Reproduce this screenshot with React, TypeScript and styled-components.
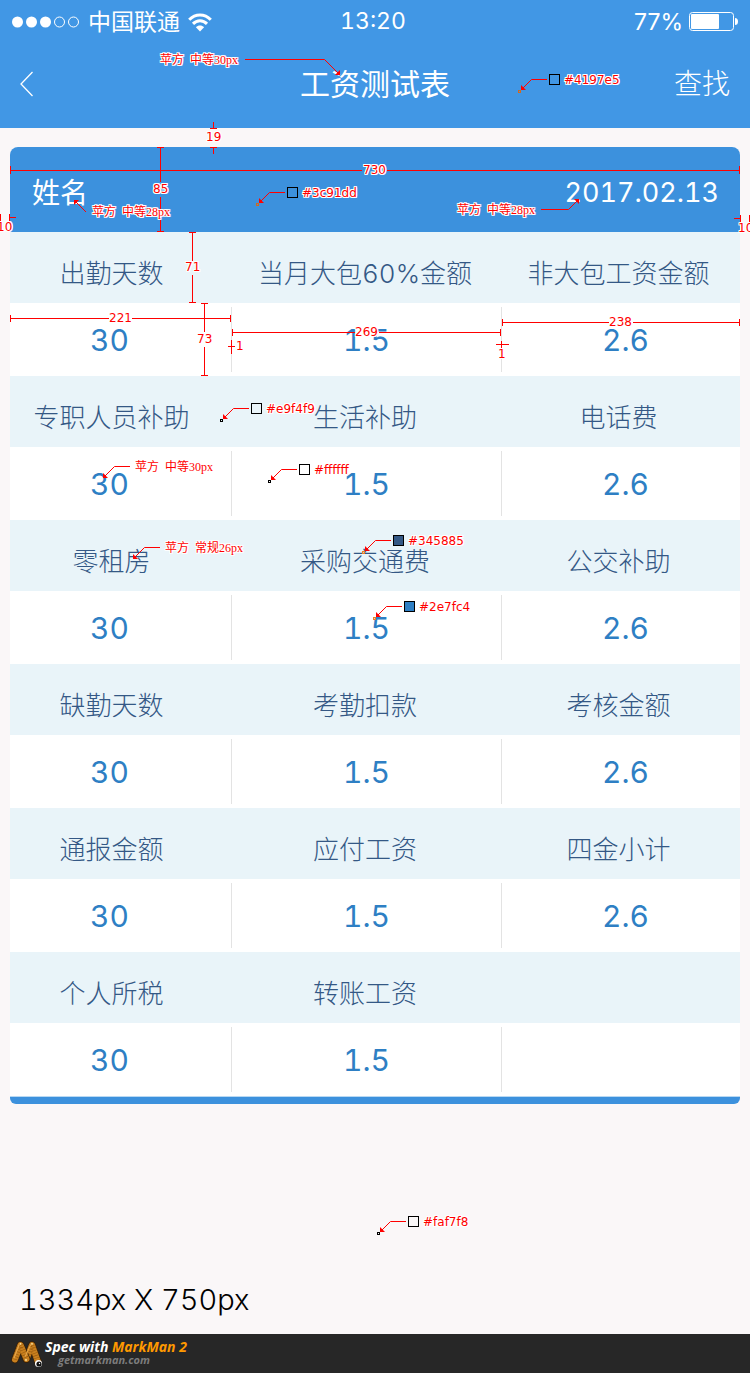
import React from 'react';
import styled, { createGlobalStyle } from 'styled-components';

const GlobalStyle = createGlobalStyle`
  *, *::before, *::after { box-sizing: border-box; }
  body { margin: 0; background: #faf7f8; }
`;

const UI_FONT = 'Inter, "Noto Sans CJK SC", sans-serif';

const Page = styled.div`
  position: relative;
  display: flex;
  flex-direction: column;
  min-height: 100vh;
  overflow: hidden;
  background: #faf7f8;
  font-family: ${UI_FONT};
  font-variant-numeric: tabular-nums;
`;

const Header = styled.header`
  background: #4197e5;
  color: #fff;
`;

const StatusBar = styled.div`
  display: grid;
  grid-template-columns: 1fr auto 1fr;
  align-items: center;
  height: 42px;
  padding: 2px 12px 0;
  font-size: 23px;
  line-height: 28px;
`;

const StatusGroup = styled.div<{ $end?: boolean }>`
  display: flex;
  align-items: center;
  justify-content: ${(p) => (p.$end ? 'flex-end' : 'flex-start')};
  gap: ${(p) => (p.$end ? 6 : 8)}px;
`;

const Time = styled.time`
  margin-right: 4px;
  padding-bottom: 2px;
`;

const Percent = styled.span`
  font-variant-numeric: normal;
`;

const NavBar = styled.nav`
  display: grid;
  grid-template-columns: 1fr auto 1fr;
  align-items: center;
  height: 86px;
  padding: 0 20px 2px;
`;

const NavButton = styled.button<{ $end?: boolean }>`
  justify-self: ${(p) => (p.$end ? 'end' : 'start')};
  display: flex;
  align-items: center;
  padding: 0;
  border: 0;
  background: none;
  color: inherit;
  font: 300 28px/40px ${UI_FONT};
  cursor: pointer;
`;

const Title = styled.h1`
  margin: 0;
  font-size: 30px;
  font-weight: 400;
  line-height: 40px;
`;

const Card = styled.main`
  margin: 19px 10px 0;
  border-bottom: 7px solid #3c91dd;
  border-radius: 8px 8px 6px 6px;
  overflow: hidden;
  background: #fff;
`;

const CardHead = styled.div`
  display: flex;
  justify-content: space-between;
  align-items: center;
  height: 85px;
  padding: 6px 21px 0 22px;
  background: #3c91dd;
  color: #fff;
  font-size: 28px;
  line-height: 40px;
`;

const PayDate = styled.time`
  font-size: 27px;
`;

const Table = styled.table`
  width: 100%;
  table-layout: fixed;
  border-collapse: collapse;
  border-bottom: 1px solid #b9d9f3;
`;

const Col = styled.col<{ $share: number }>`
  width: ${(p) => (p.$share / 730) * 100}%;
`;

const LabelCell = styled.th`
  height: 71px;
  padding: 12px 0 0;
  background: #e9f4f9;
  color: #345885;
  font-size: 26px;
  font-weight: 300;
  line-height: 36px;
  white-space: nowrap;

  &:first-child { padding-right: 18px; }
  &:nth-child(2) { padding-right: 2px; }
  &:last-child { padding-right: 4px; }
`;

const ValueCell = styled.td`
  height: 73px;
  padding: 4px 0;
  color: #2e7fc4;
  font-size: 30px;
  font-weight: 400;
  line-height: 67px;
  text-align: center;

  &:first-child { padding-right: 22px; }
  &:last-child > div { padding-left: 9px; }
  & + & > div { border-left: 1px solid #e3e3e3; }
`;

const Value = styled.div`
  height: 65px;
`;

const SizeNote = styled.p`
  margin: auto 0 0;
  padding: 0 19px 14px;
  color: #000;
  font-size: 29px;
  font-weight: 300;
  line-height: 40px;
`;

const Credit = styled.footer`
  display: flex;
  align-items: center;
  gap: 2px;
  height: 39px;
  padding-left: 11px;
  background: #272727;
  color: #fff;
  font: italic 700 14px/14px "Open Sans", sans-serif;
`;

const CreditText = styled.div`
  display: flex;
  flex-direction: column;
  padding-bottom: 2px;
`;

const Brand = styled.span`
  color: #f90;
`;

const Site = styled.a`
  padding-left: 13px;
  color: #7c7c7c;
  font-size: 11px;
  line-height: 12px;
  text-decoration: none;
`;

/* Annotation layer: sits over the screen and never takes clicks. */
const Layer = styled.div`
  position: absolute;
  inset: 0;
  overflow: hidden;
  pointer-events: none;
`;

const Marks = styled.svg`
  position: absolute;
  left: 0;
  top: 0;
  display: block;
`;

const Tag = styled.span<{ $x: number; $y: number; $cjk?: boolean }>`
  position: absolute;
  left: ${(p) => p.$x}px;
  top: ${(p) => p.$y - 8}px;
  color: #f00;
  font: 12px/16px ${(p) =>
    p.$cjk
      ? '"Liberation Serif", "Noto Sans CJK SC", serif'
      : '"DejaVu Sans", sans-serif'};
  white-space: pre;
  text-shadow: 1px 0 #fff, -1px 0 #fff, 0 1px #fff, 0 -1px #fff,
    1px 1px #fff, -1px -1px #fff, 1px -1px #fff, -1px 1px #fff;
`;

const rows: { labels: string[]; values: string[] }[] = [
  { labels: ['出勤天数', '当月大包60%金额', '非大包工资金额'], values: ['30', '1.5', '2.6'] },
  { labels: ['专职人员补助', '生活补助', '电话费'], values: ['30', '1.5', '2.6'] },
  { labels: ['零租房', '采购交通费', '公交补助'], values: ['30', '1.5', '2.6'] },
  { labels: ['缺勤天数', '考勤扣款', '考核金额'], values: ['30', '1.5', '2.6'] },
  { labels: ['通报金额', '应付工资', '四金小计'], values: ['30', '1.5', '2.6'] },
  { labels: ['个人所税', '转账工资', ''], values: ['30', '1.5', ''] },
];

/* Measuring lines; each path is drawn on pixel centres. */
const rulers = [
  'M213.5 122V129M210 128.5h7M210 147.5h7M213.5 147V154',
  'M10 170.5H362M387 170.5H740M10.5 166v8M739.5 166v8',
  'M160.5 147V182M160.5 197V232M157 147.5h7M157 231.5h7',
  'M0.5 214v8M9.5 214v8M9 217.5h7',
  'M734 218.5h7M740.5 215v8M749.5 215v8',
  'M192.5 232V261M192.5 275V303M189 232.5h7M189 302.5h7',
  'M10 318.5H109M132 318.5H231M10.5 315v7M230.5 315v7',
  'M204.5 303V332M204.5 347V376M201 303.5h7M201 375.5h7',
  'M231.5 340V354M228 346.5h7',
  'M232 332.5H355M379 332.5H501M232.5 329v7M500.5 329v7',
  'M501.5 341V350M496 344.5h13',
  'M502 322.5H609M633 322.5H740M502.5 319v7M739.5 319v7',
];

const measures: [string, number, number][] = [
  ['19', 206, 137], ['730', 363, 170], ['85', 153, 189], ['10', -3, 227],
  ['10', 738, 228], ['71', 185, 267], ['221', 109, 318], ['73', 197, 339],
  ['1', 236, 346], ['269', 355, 332], ['1', 498, 354], ['238', 609, 322],
];

const fontTags: [string, number, number][] = [
  ['苹方  中等30px', 160, 60], ['苹方  中等28px', 92, 212], ['苹方  中等28px', 457, 210],
  ['苹方  中等30px', 135, 467], ['苹方  常规26px', 165, 548],
];

const fontLeaders: { line: string; head: string }[] = [
  { line: 'M245 59.5H324.5L339 74', head: 'M340 75h-5l5 -5z' },
  { line: 'M86 212L76 202', head: 'M74 200h5l-5 5z' },
  { line: 'M541 209.5H568.5L578 200', head: 'M579 199h-5l5 5z' },
  { line: 'M130 466.5H114.5L105 476', head: 'M103 478v-5l5 5z' },
  { line: 'M160 547.5H144.5L135 557', head: 'M133 559v-5l5 5z' },
];

const swatches: { hex: string; x: number; y: number; dot: string }[] = [
  { hex: '#4197e5', x: 549, y: 74, dot: '#d2691e' },
  { hex: '#3c91dd', x: 287, y: 187, dot: '#d2691e' },
  { hex: '#e9f4f9', x: 251, y: 403, dot: '#000' },
  { hex: '#ffffff', x: 299, y: 464, dot: '#000' },
  { hex: '#345885', x: 393, y: 535, dot: '#f08020' },
  { hex: '#2e7fc4', x: 404, y: 601, dot: '#f08020' },
  { hex: '#faf7f8', x: 408, y: 1216, dot: '#000' },
];

function Annotations() {
  return (
    <Layer>
      <Marks width="750" height="1334" viewBox="0 0 750 1334" fill="none" stroke="#f00">
        {rulers.map((d) => <path key={d} d={d} shapeRendering="crispEdges" />)}
        {fontLeaders.map(({ line, head }) => (
          <g key={line}>
            <path d={line} />
            <path d={head} fill="#f00" stroke="none" />
          </g>
        ))}
        {swatches.map(({ hex, x, y, dot }) => (
          <g key={hex}>
            <path d={`M${x - 2} ${y + 5.5}H${x - 17.5}L${x - 27} ${y + 15}`} />
            <path d={`M${x - 28} ${y + 16}v-5l5 5z`} fill="#f00" stroke="none" />
            <rect x={x - 30.5} y={y + 16.5} width="2" height="2" stroke={dot} />
            <rect x={x + 0.5} y={y + 0.5} width="10" height="10" fill={hex} stroke="#000" />
          </g>
        ))}
      </Marks>
      {measures.map(([text, x, y]) => <Tag key={`${text}-${x}`} $x={x} $y={y}>{text}</Tag>)}
      {fontTags.map(([text, x, y]) => <Tag key={`${x}-${y}`} $x={x} $y={y} $cjk>{text}</Tag>)}
      {swatches.map(({ hex, x, y }) => <Tag key={hex} $x={x + 15} $y={y + 6}>{hex}</Tag>)}
    </Layer>
  );
}

function Signal() {
  return (
    <svg width="68" height="12" viewBox="0 0 68 12" fill="none" stroke="#fff">
      {[6, 20, 34].map((x) => <circle key={x} cx={x - 0.5} cy="6" r="5.5" fill="#fff" stroke="none" />)}
      {[48, 62].map((x) => <circle key={x} cx={x - 0.5} cy="6" r="5" />)}
    </svg>
  );
}

function Wifi() {
  return (
    <svg width="24" height="19" viewBox="0 0 24 19" fill="none" stroke="#fff" strokeWidth="3">
      <path d="M1.2 6.800C7.400 .3 16.600 .3 22.800 6.800" />
      <path d="M5 10.900C9 6.800 15 6.800 19 10.900" />
      <path d="M12 18.500L7.900 14.300C10.200 12 13.800 12 16.100 14.300Z" fill="#fff" stroke="none" />
    </svg>
  );
}

function Battery() {
  return (
    <svg width="49" height="20" viewBox="0 0 49 20" fill="none">
      <rect x="0.5" y="0.5" width="44" height="18" rx="3" stroke="#fff" />
      <rect x="2" y="2" width="28" height="15" rx="1" fill="#fff" />
      <path d="M46 6q3 0 3 3.500t-3 3.500z" fill="#fff" />
    </svg>
  );
}

/* Two orange worms bent into an M, one eye at the lower right. */
function WormLogo() {
  const left = 'M4 20.500L9.500 6L15.500 20';
  const right = 'M15.500 20L21 6L27 23';
  return (
    <svg width="32" height="29" viewBox="0 0 32 29" fill="none" strokeLinecap="round" strokeLinejoin="round">
      {[right, left].map((d) => (
        <g key={d}>
          <path d={d} stroke="#3a2208" strokeWidth="7.500" />
          <path d={d} stroke="#c9801f" strokeWidth="6" />
          <path d={d} stroke="#97590f" strokeWidth="6" strokeDasharray="0.6 2" strokeLinecap="butt" />
        </g>
      ))}
      <path d="M3 19L8 6M14.500 17L19.500 6" stroke="#e6a548" strokeWidth="1.200" />
      <circle cx="9.500" cy="4.800" r="0.900" fill="#ffe9a8" />
      <circle cx="21" cy="4.800" r="0.900" fill="#ffe9a8" />
      <circle cx="15" cy="21" r="0.900" fill="#ffe9a8" />
      <circle cx="27.500" cy="24.500" r="3.500" fill="#fff" />
      <circle cx="28" cy="25" r="2.600" fill="#111" />
      <circle cx="28.500" cy="24.500" r="0.700" fill="#fff" />
    </svg>
  );
}

export default function App() {
  return (
    <Page>
      <GlobalStyle />
      <Header>
        <StatusBar>
          <StatusGroup>
            <Signal />
            <span>中国联通</span>
            <Wifi />
          </StatusGroup>
          <Time>13:20</Time>
          <StatusGroup $end>
            <Percent>77%</Percent>
            <Battery />
          </StatusGroup>
        </StatusBar>
        <NavBar>
          <NavButton type="button" aria-label="返回">
            <svg width="13" height="26" viewBox="0 0 13 26" fill="none" stroke="#fff" strokeWidth="1.300">
              <path d="M12.500 1L1 13L12.500 25" />
            </svg>
          </NavButton>
          <Title>工资测试表</Title>
          <NavButton type="button" $end>查找</NavButton>
        </NavBar>
      </Header>

      <Card>
        <CardHead>
          <span>姓名</span>
          <PayDate>2017.02.13</PayDate>
        </CardHead>
        <Table>
          <colgroup>
            <Col $share={221} />
            <Col $share={270} />
            <Col $share={239} />
          </colgroup>
          <tbody>
            {rows.map((row) => (
              <React.Fragment key={row.labels[0]}>
                <tr>
                  {row.labels.map((text, i) => <LabelCell key={i}>{text}</LabelCell>)}
                </tr>
                <tr>
                  {row.values.map((text, i) => (
                    <ValueCell key={i}><Value>{text}</Value></ValueCell>
                  ))}
                </tr>
              </React.Fragment>
            ))}
          </tbody>
        </Table>
      </Card>

      <SizeNote>1334px X 750px</SizeNote>
      <Credit>
        <WormLogo />
        <CreditText>
          <span>Spec with <Brand>MarkMan 2</Brand></span>
          <Site href="#">getmarkman.com</Site>
        </CreditText>
      </Credit>
      <Annotations />
    </Page>
  );
}
